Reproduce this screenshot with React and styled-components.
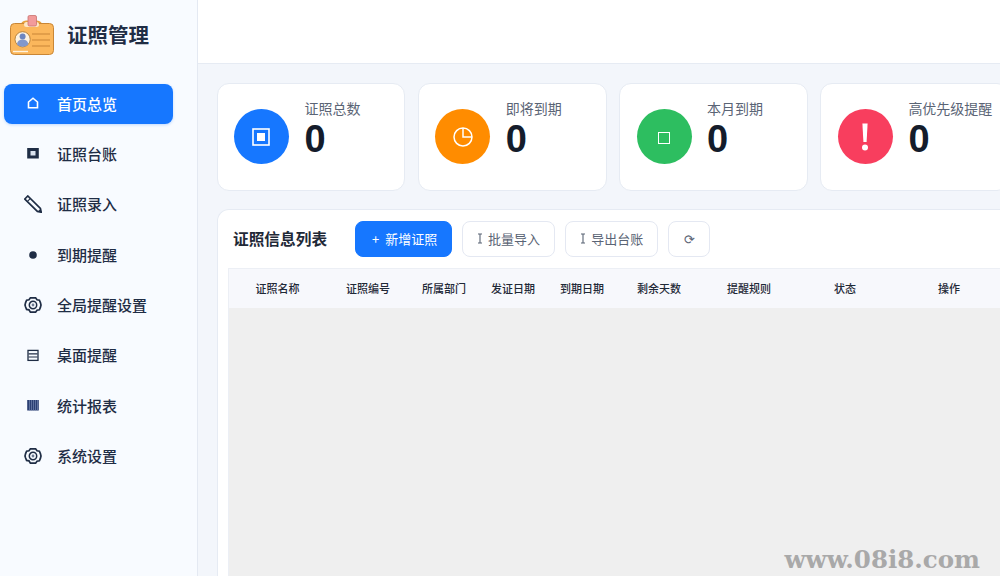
import React from "react";
import styled, { createGlobalStyle } from "styled-components";

const FONT = `"Noto Sans CJK SC", "Noto Sans", "Liberation Sans", sans-serif`;

const GlobalStyle = createGlobalStyle`
  html, body {
    margin: 0;
    height: 100%;
    overflow: hidden;
  }
  body {
    font-family: ${FONT};
    background: #f3f6fb;
  }
  #root {
    height: 100%;
  }
`;

const Page = styled.div`
  display: flex;
  height: 576px;
  width: 1000px;
  overflow: hidden;
  position: relative;
`;

const Sidebar = styled.aside`
  flex: 0 0 198px;
  box-sizing: border-box;
  background: #f8fbff;
  border-right: 1px solid #e4e9f2;
`;

const Brand = styled.div`
  display: flex;
  align-items: center;
  height: 70px;
  padding-left: 10px;
  gap: 13px;
`;

const BrandName = styled.div`
  font-size: 20.5px;
  font-weight: 700;
  color: #1f2d45;
  padding-bottom: 2px;
`;

const Nav = styled.nav`
  display: flex;
  flex-direction: column;
  gap: 10.4px;
  padding: 14px 24px 0 4px;
`;

const NavItem = styled.div`
  display: flex;
  align-items: center;
  box-sizing: border-box;
  height: 40px;
  border-radius: 8px;
  padding: 0 0 2px 20px;
  gap: 15px;
  font-size: 15px;
  font-weight: 500;
  color: ${(props) => (props.$active ? "#ffffff" : "#1f2d45")};
  background: ${(props) => (props.$active ? "#1677ff" : "transparent")};
  box-shadow: ${(props) => (props.$active ? "0 1px 3px rgba(22,119,255,0.25)" : "none")};
`;

const NavIcon = styled.svg`
  width: 18px;
  height: 18px;
  flex: none;
`;

const Main = styled.main`
  flex: 1;
  min-width: 0;
  display: flex;
  flex-direction: column;
`;

const TopBar = styled.header`
  flex: 0 0 64px;
  box-sizing: border-box;
  background: #ffffff;
  border-bottom: 1px solid #e6ebf3;
`;

const Content = styled.div`
  flex: 1;
  padding: 19px 0 0 18.6px;
  display: flex;
  flex-direction: column;
  gap: 18px;
`;

const CardRow = styled.div`
  display: flex;
  gap: 12.5px;
`;

const StatCard = styled.div`
  flex: 0 0 188.8px;
  box-sizing: border-box;
  height: 108px;
  background: #ffffff;
  border: 1px solid #e6ebf3;
  border-radius: 12px;
  padding: 25px 0 0 16.4px;
  display: flex;
  gap: 15.5px;
`;

const IconCircle = styled.div`
  flex: none;
  width: 55px;
  height: 55px;
  border-radius: 50%;
  background: ${(props) => props.$color};
  display: flex;
  align-items: center;
  justify-content: center;
`;

const StatBody = styled.div`
  margin-top: -11px;
`;

const StatLabel = styled.div`
  font-size: 14px;
  line-height: 20px;
  color: #5a6475;
  white-space: nowrap;
`;

const StatValue = styled.div`
  font-family: "Liberation Sans", "Inter", sans-serif;
  font-size: 38px;
  font-weight: 700;
  line-height: 42px;
  color: #141c2b;
`;

const Panel = styled.section`
  flex: 1;
  width: 800px;
  background: #ffffff;
  border: 1px solid #e6ebf3;
  border-bottom: none;
  border-radius: 12px 12px 0 0;
  padding: 11px 0 0 10.4px;
  display: flex;
  flex-direction: column;
  gap: 11px;
`;

const Toolbar = styled.div`
  display: flex;
  align-items: center;
  height: 36px;
  gap: 10px;
  padding-left: 5px;
`;

const PanelTitle = styled.h2`
  margin: 0 18px 2px 0;
  font-size: 15.7px;
  font-weight: 700;
  color: #1f2937;
`;

const Button = styled.button`
  box-sizing: border-box;
  height: 36px;
  padding: 0 14px 2px;
  border-radius: 8px;
  font-family: ${FONT};
  font-size: 13px;
  white-space: nowrap;
  display: flex;
  align-items: center;
  gap: 5px;
  color: ${(props) => (props.$primary ? "#ffffff" : "#5a6475")};
  background: ${(props) => (props.$primary ? "#1677ff" : "#ffffff")};
  border: 1px solid ${(props) => (props.$primary ? "#1677ff" : "#e4e8f2")};
`;

const PrimaryButton = styled(Button)`
  width: 97px;
  padding: 0 0 2px 16px;
  gap: 6px;
`;

const RefreshButton = styled(Button)`
  width: 42px;
  padding: 0 0 2px;
  justify-content: center;
`;

const Table = styled.div`
  flex: 1;
  display: flex;
  flex-direction: column;
  border: 1px solid #eceff5;
  border-bottom: none;
`;

const HeadRow = styled.div`
  display: grid;
  grid-template-columns: 97px 84px 68px 70px 68px 86px 94px 98px 110px;
  height: 39px;
  box-sizing: border-box;
  padding-bottom: 2px;
  align-items: center;
  background: #f7f8fc;
`;

const HeadCell = styled.div`
  text-align: center;
  font-size: 11px;
  font-weight: 500;
  color: #1f2937;
`;

const TableBody = styled.div`
  flex: 1;
  background: #efefef;
`;

const Watermark = styled.div`
  position: absolute;
  right: 20px;
  bottom: 2px;
  font-family: "DejaVu Serif", "Liberation Serif", serif;
  font-size: 24.5px;
  font-weight: 700;
  color: #a9a9a9;
`;

const LogoIcon = () => (
  <svg width="44" height="40" viewBox="0 0 44 40">
    <path d="M12 11 a4 4 0 0 1 4-4 h11 a4 4 0 0 1 4 4" fill="none" stroke="#e8a13d" strokeWidth="3" />
    <rect x="0.5" y="8.5" width="43" height="31" rx="4" fill="#fbb75c" stroke="#c98636" strokeWidth="1" />
    <rect x="14" y="7" width="15" height="5" rx="2.5" fill="#fde7c7" />
    <rect x="18" y="0.5" width="8.5" height="10.5" rx="1.5" fill="#f29b9b" stroke="#c9716f" strokeWidth="0.8" />
    <circle cx="12.6" cy="24.3" r="7.6" fill="#fdf3e3" stroke="#a4722e" strokeWidth="0.8" />
    <circle cx="12.6" cy="21.6" r="3" fill="#6d86bf" />
    <path d="M7 29.4 a5.6 5 0 0 1 11.2 0 a7.6 7.6 0 0 1 -11.2 0z" fill="#8298cc" />
    <path d="M22 19h18M22 25h18M22 31h18" stroke="#c98636" strokeWidth="1.2" />
    <path d="M3 36.5h15" stroke="#fff3df" strokeWidth="1.4" />
  </svg>
);

const ArrowMark = () => (
  <svg width="6" height="11" viewBox="0 0 6 11">
    <path d="M1 1h4M3 1v9M1 10h4" fill="none" stroke="currentColor" strokeWidth="1.1" />
  </svg>
);

const GearPaths = () => (
  <>
    <path
      d="M6.4 1.8h5.2l1.4 2 2.4.4 1 2.4L17 9l-.6 2.4-1 2.4-2.4.4-1.4 2H6.4L5 13.8l-2.4-.4-1-2.4L1 9l.6-2.4 1-2.4L5 3.8z"
      fill="none"
      stroke="currentColor"
      strokeWidth="1.7"
    />
    <circle cx="9" cy="9" r="3.7" fill="none" stroke="currentColor" strokeWidth="1.5" />
    <circle cx="9" cy="9" r="1.4" fill="#6f7d94" />
  </>
);

const icons = {
  home: <path d="M4.5 13.8V8L9 4.2 13.5 8v5.8z" fill="none" stroke="currentColor" strokeWidth="1.6" />,
  ledger: (
    <>
      <rect x="3.2" y="4" width="11.6" height="10.5" fill="currentColor" />
      <rect x="6.5" y="7" width="5" height="4.5" fill="#dbe3ef" />
    </>
  ),
  pencil: (
    <>
      <path d="M.8 4L3.8 1 16.4 13.4l.8 3.8-3.8-.8z" fill="none" stroke="currentColor" strokeWidth="1.7" />
      <path d="M3.2 6.6l3-3" stroke="currentColor" strokeWidth="1.1" />
      <path d="M13.8 16.6l2.8-2.8.7 3.5z" fill="currentColor" />
    </>
  ),
  dot: <circle cx="9" cy="10" r="3.8" fill="currentColor" />,
  gear: <GearPaths />,
  list: (
    <>
      <rect x="4" y="4.4" width="10" height="10" fill="none" stroke="currentColor" strokeWidth="1.3" />
      <path d="M4.5 7.8h9M4.5 11h9" stroke="currentColor" strokeWidth="1.2" />
    </>
  ),
  bars: (
    <>
      <rect x="3.2" y="4" width="11.6" height="10.5" fill="#2b3f73" />
      <path d="M5.5 4v10.5M7.5 4v10.5M9.5 4v10.5M11.5 4v10.5M13.5 4v10.5" stroke="#7486b0" strokeWidth="0.7" />
    </>
  ),
};

const navItems = [
  { label: "首页总览", icon: "home", active: true },
  { label: "证照台账", icon: "ledger" },
  { label: "证照录入", icon: "pencil" },
  { label: "到期提醒", icon: "dot" },
  { label: "全局提醒设置", icon: "gear" },
  { label: "桌面提醒", icon: "list" },
  { label: "统计报表", icon: "bars" },
  { label: "系统设置", icon: "gear" },
];

const statIcons = {
  square: (
    <svg width="18" height="18" viewBox="0 0 18 18">
      <rect x="1" y="1" width="16" height="16" fill="none" stroke="#fff" strokeWidth="1.6" />
      <rect x="5" y="5" width="8" height="8" fill="#fff" />
    </svg>
  ),
  pie: (
    <svg width="22" height="22" viewBox="0 0 22 22">
      <circle cx="11" cy="11" r="9" fill="none" stroke="#fff" strokeWidth="1.5" />
      <path d="M11 2v9h9" fill="none" stroke="#fff" strokeWidth="1.5" />
    </svg>
  ),
  box: (
    <svg width="14" height="14" viewBox="0 0 14 14" style={{ marginTop: 3 }}>
      <rect x="1.5" y="1.5" width="11" height="11" fill="none" stroke="#fff" strokeWidth="1" />
    </svg>
  ),
  alert: (
    <svg width="12" height="30" viewBox="0 0 12 30">
      <path d="M3.4 1.5h5.2L7.6 20H4.4z" fill="#fff" />
      <circle cx="6" cy="25.5" r="3" fill="#fff" />
    </svg>
  ),
};

const stats = [
  { label: "证照总数", color: "#1677ff", icon: "square" },
  { label: "即将到期", color: "#ff8c00", icon: "pie" },
  { label: "本月到期", color: "#2dbe60", icon: "box" },
  { label: "高优先级提醒", color: "#f83e5e", icon: "alert" },
];

const columns = ["证照名称", "证照编号", "所属部门", "发证日期", "到期日期", "剩余天数", "提醒规则", "状态", "操作"];

export default function App() {
  return (
    <>
      <GlobalStyle />
      <Page>
        <Sidebar>
          <Brand>
            <LogoIcon />
            <BrandName>证照管理</BrandName>
          </Brand>
          <Nav>
            {navItems.map((item) => (
              <NavItem key={item.label} $active={item.active}>
                <NavIcon viewBox="0 0 18 18">{icons[item.icon]}</NavIcon>
                {item.label}
              </NavItem>
            ))}
          </Nav>
        </Sidebar>
        <Main>
          <TopBar />
          <Content>
            <CardRow>
              {stats.map((stat) => (
                <StatCard key={stat.label}>
                  <IconCircle $color={stat.color}>{statIcons[stat.icon]}</IconCircle>
                  <StatBody>
                    <StatLabel>{stat.label}</StatLabel>
                    <StatValue>0</StatValue>
                  </StatBody>
                </StatCard>
              ))}
            </CardRow>
            <Panel>
              <Toolbar>
                <PanelTitle>证照信息列表</PanelTitle>
                <PrimaryButton $primary>
                  <span>+</span>
                  新增证照
                </PrimaryButton>
                <Button>
                  <ArrowMark />
                  批量导入
                </Button>
                <Button>
                  <ArrowMark />
                  导出台账
                </Button>
                <RefreshButton>⟳</RefreshButton>
              </Toolbar>
              <Table>
                <HeadRow>
                  {columns.map((col) => (
                    <HeadCell key={col}>{col}</HeadCell>
                  ))}
                </HeadRow>
                <TableBody />
              </Table>
            </Panel>
          </Content>
        </Main>
        <Watermark>www.08i8.com</Watermark>
      </Page>
    </>
  );
}
